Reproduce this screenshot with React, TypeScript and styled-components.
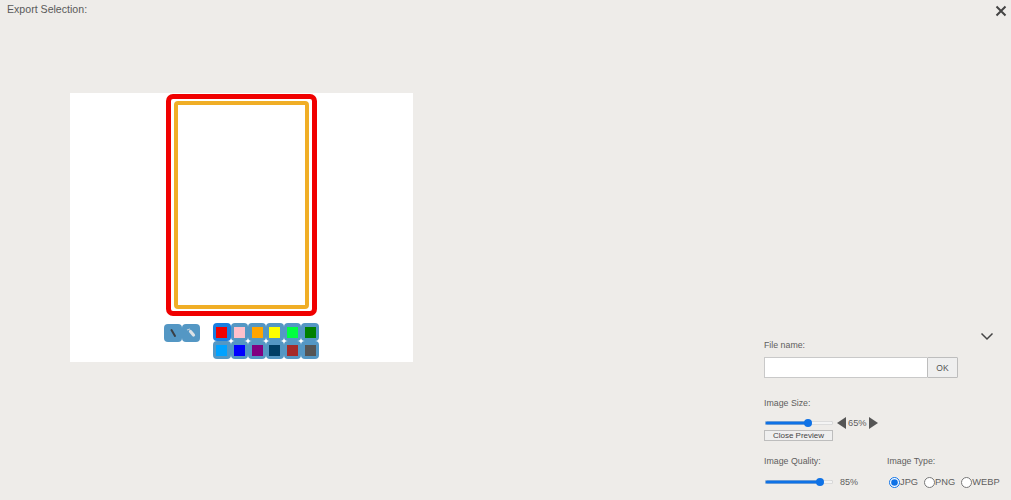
import React from "react";
import styled, { createGlobalStyle } from "styled-components";

const Global = createGlobalStyle`
  html, body { margin: 0; padding: 0; background: #eeece9; }
  body { font-family: "Liberation Sans", Arial, sans-serif; color: #555; }
`;

const Page = styled.div`
  width: 1011px;
  height: 500px;
  overflow: hidden;
  display: flex;
  flex-direction: column;
  background: #eeece9;
`;

const Header = styled.header`
  height: 93px;
  flex: none;
  display: flex;
  justify-content: space-between;
  align-items: flex-start;
  padding: 2px 4px 0 7px;
  box-sizing: border-box;
`;

const Title = styled.h1`
  margin: 0;
  font-size: 10.6px;
  line-height: 14px;
  font-weight: 400;
  color: #5a5a5a;
`;

const IconButton = styled.button`
  border: 0;
  background: none;
  padding: 0;
  display: flex;
  cursor: pointer;
`;

const Body = styled.main`
  flex: 1;
  display: flex;
  justify-content: space-between;
  align-items: flex-start;
  padding-left: 70px;
`;

const Preview = styled.section`
  width: 343px;
  height: 269px;
  background: #fff;
  padding-top: 1px;
  box-sizing: border-box;
  display: flex;
  flex-direction: column;
  align-items: flex-start;
`;

const RedFrame = styled.div`
  margin-left: 96px;
  width: 151px;
  height: 222px;
  box-sizing: border-box;
  border: 5px solid #f00000;
  border-radius: 7px;
  padding: 2px 3px 2px 3px;
  display: flex;
`;

const OrangeFrame = styled.div`
  flex: 1;
  border: 4px solid #f0ae26;
  border-radius: 4px;
`;

const Toolbar = styled.div`
  margin: 7px 0 0 94px;
  display: flex;
  align-items: flex-start;
`;

const Tools = styled.div`
  display: flex;
  margin-top: 1px;
  margin-right: 13px;
`;

const Tool = styled.div`
  width: 18px;
  height: 18px;
  background: #5497c4;
  border-radius: 4px;
  display: flex;
  align-items: center;
  justify-content: center;
`;

const Palette = styled.div`
  display: grid;
  grid-template-columns: repeat(6, 17.67px);
  grid-auto-rows: 18px;
`;

const Swatch = styled.div<{ $c: string; $active?: boolean }>`
  background: ${(p) => (p.$active ? "#1a7ee0" : "#5497c4")};
  border-radius: 4px;
  display: flex;
  align-items: center;
  justify-content: center;
  &::after {
    content: "";
    width: 11px;
    height: 11px;
    background: ${(p) => p.$c};
  }
`;

const Panel = styled.aside`
  width: 247px;
  flex: none;
  margin-top: 235px;
  font-size: 9px;
  color: #5e5e5e;
  position: relative;
  padding-top: 12px;
  box-sizing: border-box;
`;

const Collapse = styled(IconButton)`
  position: absolute;
  top: 4px;
  right: 17px;
`;

const Label = styled.label`
  display: block;
  font-size: 8.8px;
  line-height: 11px;
`;

const NameRow = styled.div`
  display: flex;
  margin-top: 6px;
  width: 194px;
  height: 21px;
`;

const NameInput = styled.input`
  width: 163px;
  box-sizing: border-box;
  background: #fff;
  border: 1px solid #c9c9c9;
  border-right: 0;
  padding: 0 4px;
  outline: none;
`;

const Ok = styled.button`
  width: 32px;
  box-sizing: border-box;
  background: #efefef;
  border: 1px solid #bdbdbd;
  font: 8.5px "Liberation Sans", Arial, sans-serif;
  color: #555;
  padding: 0;
  border-radius: 1px;
`;

const SizeSection = styled.div`
  margin-top: 20px;
`;

const SliderRow = styled.div<{ $gap: number }>`
  display: flex;
  align-items: center;
  height: 12px;
  margin-top: ${(p) => p.$gap}px;
`;

const Slider = styled.input<{ $pct: number }>`
  -webkit-appearance: none;
  appearance: none;
  width: 68px;
  height: 10px;
  margin: 0 0 0 1px;
  background: transparent;
  &::-webkit-slider-runnable-track {
    height: 4px;
    border-radius: 2px;
    background: linear-gradient(90deg, #0f72e6 ${(p) => p.$pct}%, #f4f4f4 ${(p) => p.$pct}%);
    box-shadow: inset 0 0 0 0.5px #c4c4c4;
  }
  &::-webkit-slider-thumb {
    -webkit-appearance: none;
    width: 8px;
    height: 8px;
    margin-top: -2px;
    border-radius: 50%;
    background: #0f72e6;
  }
`;

const Stepper = styled.div`
  display: flex;
  align-items: center;
  margin-left: 4px;
  gap: 2px;
  font-size: 9.3px;
`;

const Arrow = styled.span<{ $dir: "left" | "right" }>`
  width: 0;
  height: 0;
  border-top: 6px solid transparent;
  border-bottom: 6px solid transparent;
  ${(p) => (p.$dir === "left" ? "border-right: 9px solid #555;" : "border-left: 9px solid #555;")}
`;

const Small = styled.button`
  display: block;
  width: 69px;
  height: 11px;
  margin-top: 1px;
  padding: 0;
  box-sizing: border-box;
  background: #efefef;
  border: 1px solid #bdbdbd;
  font: 8px/9px "Liberation Sans", Arial, sans-serif;
  color: #444;
`;

const BottomRow = styled.div`
  display: flex;
  margin-top: 15px;
`;

const QualityCol = styled.div`
  width: 123px;
  flex: none;
`;

const Percent = styled.span`
  margin-left: 7px;
`;

const Radios = styled.div`
  display: flex;
  align-items: center;
  height: 12px;
  margin-top: 9px;
  margin-left: 2px;
`;

const RadioLabel = styled.label`
  display: flex;
  align-items: center;
  margin-right: 6px;
  font-size: 9.3px;
`;

const Radio = styled.input`
  width: 11px;
  height: 11px;
  margin: 0;
  accent-color: #0f72e6;
`;

const colors = [
  "#f00000", "#ffc0cb", "#ffa500", "#ffff00", "#00ff40", "#008000",
  "#00a2ff", "#0000ff", "#800080", "#003f66", "#a52a2a", "#555555",
];

export default function App() {
  return (
    <Page>
      <Global />
      <Header>
        <Title>Export Selection:</Title>
        <IconButton aria-label="Close">
          <svg width="12" height="12" viewBox="0 0 12 12" style={{ marginTop: 3 }}>
            <path d="M1.5 1.5l9 9M10.5 1.5l-9 9" stroke="#444" strokeWidth="2" fill="none" />
          </svg>
        </IconButton>
      </Header>
      <Body>
        <Preview>
          <RedFrame>
            <OrangeFrame />
          </RedFrame>
          <Toolbar>
            <Tools>
              <Tool>
                <svg width="12" height="12" viewBox="0 0 12 12">
                  <path d="M4.5 3l3.5 6" stroke="#3a3f44" strokeWidth="2" strokeLinecap="round" />
                </svg>
              </Tool>
              <Tool>
                <svg width="12" height="12" viewBox="0 0 12 12">
                  <path d="M2 3l3-1" stroke="#c3d2dc" strokeWidth="1.1" />
                  <path d="M5.5 4.5l3 3.5" stroke="#dde2e6" strokeWidth="3.2" strokeLinecap="round" />
                </svg>
              </Tool>
            </Tools>
            <Palette>
              {colors.map((c, i) => (
                <Swatch key={c} $c={c} $active={i === 0} />
              ))}
            </Palette>
          </Toolbar>
        </Preview>
        <Panel>
          <Collapse aria-label="Collapse">
            <svg width="14" height="9" viewBox="0 0 14 9">
              <path d="M1.5 1.5L7 7l5.5-5.5" stroke="#444" strokeWidth="1.5" fill="none" />
            </svg>
          </Collapse>
          <Label>File name:</Label>
          <NameRow>
            <NameInput />
            <Ok>OK</Ok>
          </NameRow>
          <SizeSection>
            <Label>Image Size:</Label>
            <SliderRow $gap={8}>
              <Slider type="range" readOnly value={65} min={0} max={100} $pct={63} />
              <Stepper>
                <Arrow $dir="left" />
                <span>65%</span>
                <Arrow $dir="right" />
              </Stepper>
            </SliderRow>
            <Small>Close Preview</Small>
          </SizeSection>
          <BottomRow>
            <QualityCol>
              <Label>Image Quality:</Label>
              <SliderRow $gap={9}>
                <Slider type="range" readOnly value={85} min={0} max={100} $pct={82} />
                <Percent>85%</Percent>
              </SliderRow>
            </QualityCol>
            <div>
              <Label>Image Type:</Label>
              <Radios>
                <RadioLabel><Radio type="radio" name="t" defaultChecked />JPG</RadioLabel>
                <RadioLabel><Radio type="radio" name="t" />PNG</RadioLabel>
                <RadioLabel><Radio type="radio" name="t" />WEBP</RadioLabel>
              </Radios>
            </div>
          </BottomRow>
        </Panel>
      </Body>
    </Page>
  );
}
